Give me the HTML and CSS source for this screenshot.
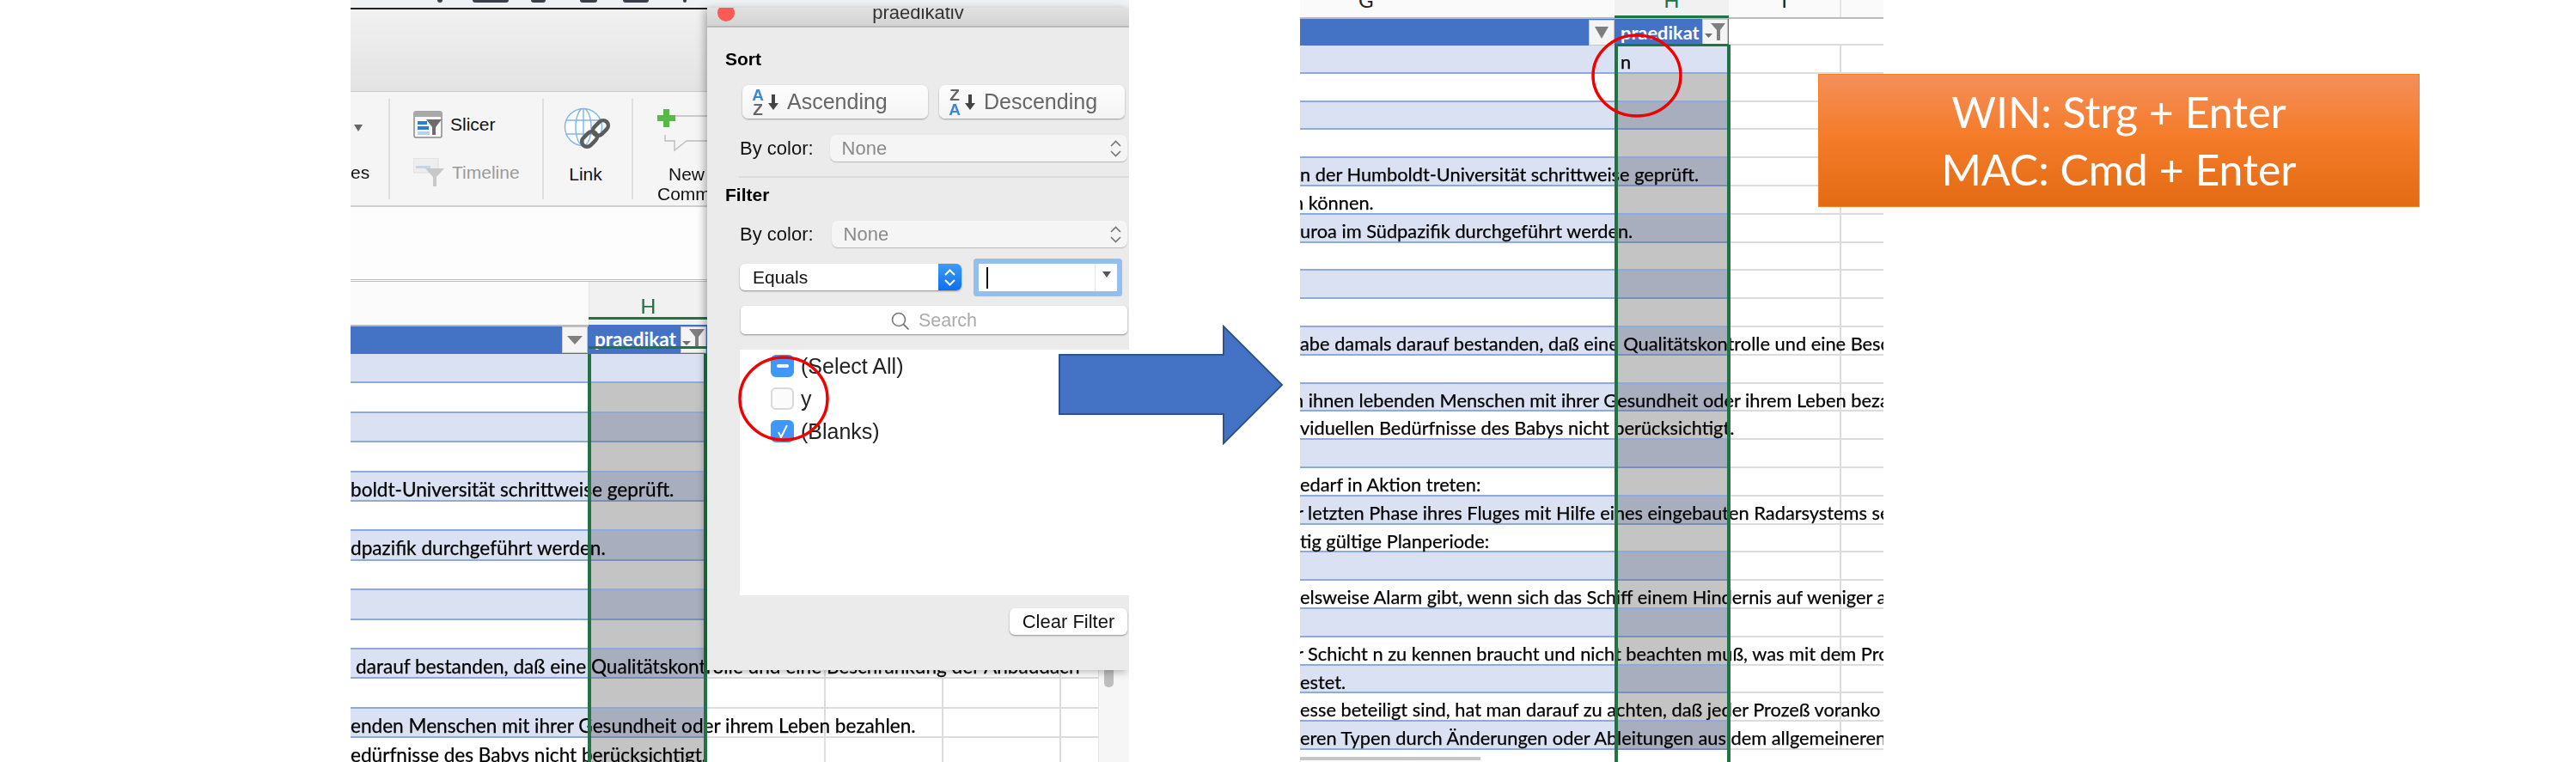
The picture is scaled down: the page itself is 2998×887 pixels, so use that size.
FILE: index.html

```html
<!DOCTYPE html>
<html lang="de">
<head>
    <meta charset="UTF-8">
    <title>Filter praedikativ</title>
    <link rel="stylesheet" href="styles.css">
</head>
<body>
<div class="stage">

    <!-- linker Screenshot: Excel mit Filterdialog -->
    <div class="shot shot-left">
        <div class="menubar"><i class="m1"></i><i class="m2"></i><i class="m3"></i><i class="m4"></i><i class="m5"></i><i class="m6"></i></div>
        <div class="toolbar"></div>
        <div class="ribbon">
            <div class="group g-shapes">
                <span class="tri"></span>
                <span class="rb-label">es</span>
            </div>
            <div class="group g-slicer">
                <div class="rb-item">
                    <svg width="34" height="32" viewBox="0 0 34 32"><rect x="1" y="1" width="32" height="30" rx="2" fill="#fafafa" stroke="#8b8b8b" stroke-width="1.5"/><rect x="1" y="1" width="32" height="6" fill="#a9a9a9"/><rect x="5" y="12" width="11" height="4" fill="#2f7bd6"/><rect x="5" y="18" width="13" height="4" fill="#2f7bd6"/><rect x="5" y="24" width="14" height="4" fill="#b7d2f0"/><path d="M15 10h18l-7 9v9h-4v-9z" fill="#6d6d6d"/></svg>
                    <span>Slicer</span>
                </div>
                <div class="rb-item off">
                    <svg width="36" height="34" viewBox="0 0 36 34"><rect x="0" y="0" width="29" height="17" fill="#ededed" stroke="#dcdcdc"/><rect x="3" y="9" width="17" height="3" fill="#c3d5ea"/><path d="M14 12h22l-9 10v11h-4V22z" fill="#c8c8c8"/></svg>
                    <span>Timeline</span>
                </div>
            </div>
            <div class="group g-link">
                <svg width="56" height="54" viewBox="0 0 56 54"><g fill="#fff" stroke="#7fb4ec" stroke-width="1.4"><circle cx="23" cy="23" r="21.5"/><ellipse cx="23" cy="23" rx="9" ry="21.5"/><path d="M3 15h40M3 31h40M23 1v44" fill="none"/></g><g fill="none" stroke="#5c5c5c" stroke-width="4.5"><rect x="33" y="18" width="20" height="12" rx="6" transform="rotate(-45 43 24)"/><rect x="20" y="31" width="20" height="12" rx="6" transform="rotate(-45 30 37)"/></g></svg>
                <span class="rb-label">Link</span>
            </div>
            <div class="group g-comment">
                <svg width="60" height="50" viewBox="0 0 60 50"><path d="M10 8h50M9 30v7h11v11l14-11h26" fill="none" stroke="#bdbdbd" stroke-width="1.4"/><path d="M7 0h7v7h7v7h-7v7H7v-7H0V7h7z" fill="#58b947"/></svg>
                <span class="rb-label">New<br>Comme</span>
            </div>
        </div>
        <div class="formula"></div>
        <div class="colhead"><div class="ch-main"></div><div class="ch-h">H</div></div>
        <div class="head">
            <div class="h-main"><span class="fbtn"><svg width="18" height="10" viewBox="0 0 18 10"><path d="M0 0h18L9 10z" fill="#7f7f7f"/></svg></span></div>
            <div class="h-pred">praedikat<span class="fbtn"><svg width="26" height="24" viewBox="0 0 26 24"><path d="M0 14h10l-5 5z" fill="#6f6f6f"/><path d="M8 0h18l-7 9v12h-4V9z" fill="#7f7f7f"/></svg></span></div>
        </div>
        <div class="row band plain"><div class="c-main"></div><div class="c-h"></div><div class="c-x"></div><div class="c-x"></div><div class="c-x"></div><div class="c-x last"></div></div>
        <div class="row"><div class="c-main"></div><div class="c-h"></div><div class="c-x"></div><div class="c-x"></div><div class="c-x"></div><div class="c-x last"></div></div>
        <div class="row band"><div class="c-main"></div><div class="c-h"></div><div class="c-x"></div><div class="c-x"></div><div class="c-x"></div><div class="c-x last"></div></div>
        <div class="row"><div class="c-main"></div><div class="c-h"></div><div class="c-x"></div><div class="c-x"></div><div class="c-x"></div><div class="c-x last"></div></div>
        <div class="row band"><div class="c-main"><span>boldt-Universität schrittweise geprüft.</span></div><div class="c-h"></div><div class="c-x"></div><div class="c-x"></div><div class="c-x"></div><div class="c-x last"></div></div>
        <div class="row"><div class="c-main"></div><div class="c-h"></div><div class="c-x"></div><div class="c-x"></div><div class="c-x"></div><div class="c-x last"></div></div>
        <div class="row band"><div class="c-main"><span>dpazifik durchgeführt werden.</span></div><div class="c-h"></div><div class="c-x"></div><div class="c-x"></div><div class="c-x"></div><div class="c-x last"></div></div>
        <div class="row"><div class="c-main"></div><div class="c-h"></div><div class="c-x"></div><div class="c-x"></div><div class="c-x"></div><div class="c-x last"></div></div>
        <div class="row band"><div class="c-main"></div><div class="c-h"></div><div class="c-x"></div><div class="c-x"></div><div class="c-x"></div><div class="c-x last"></div></div>
        <div class="row"><div class="c-main"></div><div class="c-h"></div><div class="c-x"></div><div class="c-x"></div><div class="c-x"></div><div class="c-x last"></div></div>
        <div class="row band"><div class="c-main"><span class="ind">darauf bestanden, daß eine Qualitätskontrolle und eine Beschränkung der Anbaudach</span></div><div class="c-h"></div><div class="c-x"></div><div class="c-x"></div><div class="c-x"></div><div class="c-x last"></div></div>
        <div class="row"><div class="c-main"></div><div class="c-h"></div><div class="c-x"></div><div class="c-x"></div><div class="c-x"></div><div class="c-x last"></div></div>
        <div class="row band"><div class="c-main"><span>enden Menschen mit ihrer Gesundheit oder ihrem Leben bezahlen.</span></div><div class="c-h"></div><div class="c-x"></div><div class="c-x"></div><div class="c-x"></div><div class="c-x last"></div></div>
        <div class="row"><div class="c-main"><span>edürfnisse des Babys nicht berücksichtigt.</span></div><div class="c-h"></div><div class="c-x"></div><div class="c-x"></div><div class="c-x"></div><div class="c-x last"></div></div>

        <div class="sel"></div>
        <div class="sbar"><div class="sthumb"></div></div>

        <div class="dialog">
            <div class="d-title"><span>praedikativ</span><i class="d-close"></i></div>
            <h4 class="d-head sort">Sort</h4>
            <div class="d-btns">
                <div class="d-btn"><span class="az"><b class="blue">A</b><b>Z</b></span><svg class="down" width="12" height="18" viewBox="0 0 12 18"><path d="M4 0h4v10h4l-6 8-6-8h4z" fill="#444"/></svg>Ascending</div>
                <div class="d-btn"><span class="az"><b>Z</b><b class="blue">A</b></span><svg class="down" width="12" height="18" viewBox="0 0 12 18"><path d="M4 0h4v10h4l-6 8-6-8h4z" fill="#444"/></svg>Descending</div>
            </div>
            <div class="d-row r-color">
                <label>By color:</label>
                <div class="d-select">None
                    <svg width="13" height="20" viewBox="0 0 13 20"><path d="M1 7l5.500-5.500L12 7M1 13l5.500 5.500L12 13" fill="none" stroke="#777" stroke-width="1.600"/></svg>
                </div>
            </div>
            <div class="d-sep"></div>
            <h4 class="d-head filter">Filter</h4>
            <div class="d-row r-color2">
                <label>By color:</label>
                <div class="d-select second">None
                    <svg width="13" height="20" viewBox="0 0 13 20"><path d="M1 7l5.500-5.500L12 7M1 13l5.500 5.500L12 13" fill="none" stroke="#777" stroke-width="1.600"/></svg>
                </div>
            </div>
            <div class="d-row r-equals">
                <div class="d-equals">Equals
                    <span class="stepper"><svg width="13" height="20" viewBox="0 0 13 20"><path d="M1 7l5.500-5.500L12 7M1 13l5.500 5.500L12 13" fill="none" stroke="#fff" stroke-width="2"/></svg></span>
                </div>
                <div class="d-input"><i class="caret"></i><span class="combo"></span></div>
            </div>
            <div class="d-search">
                <svg width="21" height="21" viewBox="0 0 21 21"><circle cx="9" cy="9" r="7.500" fill="none" stroke="#777" stroke-width="1.600"/><path d="M14.500 14.500l6 6" stroke="#777" stroke-width="1.800"/></svg>
                Search
            </div>
            <div class="d-list">
                <div class="li"><span class="cb mixed"></span>(Select All)</div>
                <div class="li"><span class="cb"></span>y</div>
                <div class="li"><span class="cb on"><svg width="16" height="18" viewBox="0 0 16 18"><path d="M3 10l3 6 7-14" fill="none" stroke="#fff" stroke-width="2"/></svg></span>(Blanks)</div>
            </div>
            <div class="d-clear">Clear Filter</div>
        </div>
    </div>

    <!-- rechter Screenshot: Ergebnis nach Eingabe -->
    <div class="shot shot-right">
        <div class="colhead"><div class="ch-main">G</div><div class="ch-h">H</div><div class="ch-i">I</div><div class="ch-rest"></div></div>
        <div class="head">
            <div class="h-main"><span class="fbtn"><svg width="16" height="14" viewBox="0 0 16 14"><path d="M0 0h16L8 14z" fill="#7f7f7f"/></svg></span></div>
            <div class="h-pred">praedikat<span class="fbtn"><svg width="24" height="22" viewBox="0 0 24 22"><path d="M0 12h9l-4.500 5z" fill="#6f6f6f"/><path d="M7 0h17l-6 8v12h-4V8z" fill="#7f7f7f"/></svg></span></div>
            <div class="h-rest"></div>
        </div>
        <div class="row band plain"><div class="c-main"></div><div class="c-h"><span class="val">n</span></div><div class="c-x"></div><div class="c-x last"></div></div>
        <div class="row"><div class="c-main"></div><div class="c-h"></div><div class="c-x"></div><div class="c-x last"></div></div>
        <div class="row band"><div class="c-main"></div><div class="c-h"></div><div class="c-x"></div><div class="c-x last"></div></div>
        <div class="row"><div class="c-main"></div><div class="c-h"></div><div class="c-x"></div><div class="c-x last"></div></div>
        <div class="row band"><div class="c-main"><span>n der Humboldt-Universität schrittweise geprüft.</span></div><div class="c-h"></div><div class="c-x"></div><div class="c-x last"></div></div>
        <div class="row"><div class="c-main"><span class="clip-n">n können.</span></div><div class="c-h"></div><div class="c-x"></div><div class="c-x last"></div></div>
        <div class="row band"><div class="c-main"><span>uroa im Südpazifik durchgeführt werden.</span></div><div class="c-h"></div><div class="c-x"></div><div class="c-x last"></div></div>
        <div class="row"><div class="c-main"></div><div class="c-h"></div><div class="c-x"></div><div class="c-x last"></div></div>
        <div class="row band"><div class="c-main"></div><div class="c-h"></div><div class="c-x"></div><div class="c-x last"></div></div>
        <div class="row"><div class="c-main"></div><div class="c-h"></div><div class="c-x"></div><div class="c-x last"></div></div>
        <div class="row band"><div class="c-main"><span>abe damals darauf bestanden, daß eine Qualitätskontrolle und eine Besc</span></div><div class="c-h"></div><div class="c-x"></div><div class="c-x last"></div></div>
        <div class="row"><div class="c-main"></div><div class="c-h"></div><div class="c-x"></div><div class="c-x last"></div></div>
        <div class="row band"><div class="c-main"><span class="clip-n">n ihnen lebenden Menschen mit ihrer Gesundheit oder ihrem Leben beza</span></div><div class="c-h"></div><div class="c-x"></div><div class="c-x last"></div></div>
        <div class="row"><div class="c-main"><span>viduellen Bedürfnisse des Babys nicht berücksichtigt.</span></div><div class="c-h"></div><div class="c-x"></div><div class="c-x last"></div></div>
        <div class="row band"><div class="c-main"></div><div class="c-h"></div><div class="c-x"></div><div class="c-x last"></div></div>
        <div class="row"><div class="c-main"><span>edarf in Aktion treten:</span></div><div class="c-h"></div><div class="c-x"></div><div class="c-x last"></div></div>
        <div class="row band"><div class="c-main"><span class="clip-r">r letzten Phase ihres Fluges mit Hilfe eines eingebauten Radarsystems sel</span></div><div class="c-h"></div><div class="c-x"></div><div class="c-x last"></div></div>
        <div class="row"><div class="c-main"><span>tig gültige Planperiode:</span></div><div class="c-h"></div><div class="c-x"></div><div class="c-x last"></div></div>
        <div class="row band"><div class="c-main"></div><div class="c-h"></div><div class="c-x"></div><div class="c-x last"></div></div>
        <div class="row"><div class="c-main"><span>elsweise Alarm gibt, wenn sich das Schiff einem Hindernis auf weniger al</span></div><div class="c-h"></div><div class="c-x"></div><div class="c-x last"></div></div>
        <div class="row band"><div class="c-main"></div><div class="c-h"></div><div class="c-x"></div><div class="c-x last"></div></div>
        <div class="row"><div class="c-main"><span class="clip-r">r Schicht n zu kennen braucht und nicht beachten muß, was mit dem Pro</span></div><div class="c-h"></div><div class="c-x"></div><div class="c-x last"></div></div>
        <div class="row band"><div class="c-main"><span>estet.</span></div><div class="c-h"></div><div class="c-x"></div><div class="c-x last"></div></div>
        <div class="row"><div class="c-main"><span>esse beteiligt sind, hat man darauf zu achten, daß jeder Prozeß voranko</span></div><div class="c-h"></div><div class="c-x"></div><div class="c-x last"></div></div>
        <div class="row band"><div class="c-main"><span>eren Typen durch Änderungen oder Ableitungen aus dem allgemeineren</span></div><div class="c-h"></div><div class="c-x"></div><div class="c-x last"></div></div>
        <div class="hscroll"></div>
        <div class="sel"></div>
    </div>

    <!-- Anmerkungen über den Screenshots -->
    <svg class="mark mark-arrow" width="264" height="140" viewBox="0 0 264 140"><path d="M1 35h191V2l68 68-68 68v-34H1z" fill="#4472c4" stroke="#2f528f" stroke-width="2"/></svg>
    <svg class="mark mark-c1" width="110" height="102" viewBox="0 0 110 102"><ellipse cx="55" cy="51" rx="51" ry="48" fill="none" stroke="#f00000" stroke-width="3.5"/></svg>
    <svg class="mark mark-c2" width="110" height="102" viewBox="0 0 110 102"><ellipse cx="54" cy="51" rx="51" ry="47" fill="none" stroke="#f00000" stroke-width="3.5"/></svg>
    <div class="hint">WIN: Strg + Enter<br>MAC: Cmd + Enter</div>
</div>
</body>
</html>
```

FILE: styles.css

```css
html, body {
    margin: 0;
    background: #fff;
}
.stage {
    position: relative;
    width: 2998px;
    height: 887px;
    overflow: hidden;
    display: flex;
    padding-left: 408px;
    gap: 199px;
    box-sizing: border-box;
    font-family: "Liberation Sans", Arial, sans-serif;
    color: #111;
}
.shot {
    position: relative;
    height: 887px;
    overflow: hidden;
    flex: none;
    font-family: Lato, "Liberation Sans", sans-serif;
    filter: blur(0.4px);
}
.shot-left {
    width: 906px;
    font-size: 22.6px;
}
.shot-right {
    width: 679px;
    font-size: 21.8px;
}

/* ribbon */
.menubar {
    height: 9px;
    background: #eef2f5;
    position: relative;
}
.menubar i {
    position: absolute;
    top: 0;
    height: 3px;
    background: #3a3f47;
    border-radius: 0 0 6px 6px;
}
.m1 { left: 101px; width: 6px; }
.m2 { left: 142px; width: 42px; }
.m3 { left: 210px; width: 17px; }
.m4 { left: 267px; width: 20px; }
.m5 { left: 317px; width: 30px; }
.m6 { left: 387px; width: 4px; }
.toolbar {
    height: 98px;
    box-sizing: border-box;
    border-top: 2px solid #222;
    border-bottom: 1px solid #c9c9c9;
    background: linear-gradient(#f1f1f1, #e3e3e3);
}
.ribbon {
    height: 134px;
    box-sizing: border-box;
    background: #f5f5f5;
    border-bottom: 2px solid #cfcfcf;
    display: flex;
    padding: 8px 0;
    font-family: "Liberation Sans", sans-serif;
    font-size: 21px;
}
.group {
    box-sizing: border-box;
    border-right: 2px solid #dedede;
    height: 117px;
    flex: none;
}
.g-shapes {
    width: 46px;
    position: relative;
}
.tri {
    display: block;
    width: 0;
    margin: 30px 0 0 4px;
    border: 5px solid transparent;
    border-width: 8px 5px 0;
    border-top-color: #666;
}
.g-shapes .rb-label {
    position: absolute;
    left: 0;
    top: 74px;
}
.g-slicer {
    width: 179px;
    padding: 14px 0 0 27px;
}
.rb-item {
    display: flex;
    align-items: center;
    gap: 9px;
    height: 32px;
    margin-bottom: 24px;
}
.off {
    color: #9a9a9a;
}
.g-link {
    width: 104px;
    padding: 10px 5px 0 0;
    text-align: center;
}
.g-link svg {
    display: block;
    margin: 0 auto 12px 23px;
}
.g-comment {
    border: 0;
    width: 200px;
    padding: 12px 0 0 28px;
    line-height: 23px;
}
.g-comment svg { display: block; margin-bottom: 14px; }
.g-comment .rb-label {
    display: block;
    width: 68px;
    text-align: center;
}
.formula {
    height: 87px;
    border-bottom: 3px double #bdbdbd;
    box-sizing: border-box;
    background: #fdfdfd;
}

/* tabelle */
.colhead {
    display: flex;
    background: #fbfbfb;
    font-size: 24px;
    text-align: center;
    color: #217346;
    height: 50px;
}
.shot-left .colhead { height: 50px; }
.ch-main { width: 277px; }
.ch-h {
    width: 138px;
    background: #f1f1f1;
    line-height: 56px;
    border-left: 1px solid #e2e2e2;
    box-sizing: border-box;
}
.head {
    display: flex;
    height: 34px;
    box-sizing: border-box;
    color: #fff;
    font-weight: bold;
}
.h-main {
    width: 277px;
    background: #4472c4;
    border-top: 2px solid #bbb;
    display: flex;
    justify-content: flex-end;
    box-sizing: border-box;
}
.h-pred {
    width: 138px;
    background: #4472c4;
    padding-left: 7px;
    display: flex;
    justify-content: space-between;
    align-items: center;
    box-sizing: border-box;
    line-height: 1;
}
.fbtn {
    width: 28px;
    height: 29px;
    margin-right: 1px;
    background: #f4f4f4;
    border: 1px solid #c6c6c6;
    display: flex;
    align-items: center;
    justify-content: center;
    flex: none;
}
.row {
    display: grid;
    height: 34.4px;
    grid-template-columns: 277px 138px 138px 137px 137px 43px;
    grid-template-rows: 100%;
    line-height: 39px;
    white-space: nowrap;
    color: #000;
    -webkit-text-stroke: 0.25px #000;
}
.row > div {
    box-sizing: border-box;
    border-bottom: 2px solid #dcdcdc;
}
.c-main {
    position: relative;
    z-index: 1;
}
.ind { padding-left: 6px; }
.clip-n { margin-left: -8px; }
.clip-r { margin-left: -4px; }
.row .c-main { border-bottom-color: #8eaadb; }
.row .c-h {
    background: #c4c4c4;
    border-bottom-color: #8eaadb;
}
.row.band .c-main { background: #d9e1f2; }
.row.band .c-h {
    background: #a8aebd;
    border-bottom-color: #7a8fb8;
}
.row.band.plain .c-h { background: #d9e1f2; border-bottom-color: #8eaadb; }
.c-x { border-right: 2px solid #dcdcdc; }
.c-x.last { border-right: 0; }
.sel {
    position: absolute;
    left: 276px;
    top: 412px;
    width: 131px;
    height: 480px;
    border: solid #217346;
    border-width: 0 4px;
    z-index: 2;
}
.shot-left::after,
.shot-right::after {
    content: "";
    position: absolute;
    left: 277px;
    top: 369px;
    width: 138px;
    height: 3px;
    background: #217346;
    z-index: 2;
    box-shadow: 0 34px 0 #217346;
}
.shot-right::after {
    left: 366px;
    top: 18px;
    width: 133px;
    box-shadow: 0 33px 0 #217346;
}
.sbar {
    position: absolute;
    left: 870px;
    top: 700px;
    width: 36px;
    height: 187px;
    background: #f6f6f6;
    border-left: 1px solid #e4e4e4;
    box-sizing: border-box;
}
.sthumb {
    margin-left: 6px;
    width: 11px;
    height: 100px;
    background: #bdbdbd;
    border-radius: 5px;
}

/* dialog */
.dialog {
    position: absolute;
    left: 415px;
    top: 9px;
    width: 491px;
    height: 771px;
    background: #ebebeb;
    box-shadow: -3px 2px 9px rgba(0,0,0,.3);
    font-family: "Liberation Sans", sans-serif;
    font-size: 22px;
    z-index: 3;
}
.d-title {
    height: 21px;
    background: linear-gradient(#e2e2e2, #d3d3d3);
    border-bottom: 2px solid #b9b9b9;
    overflow: hidden;
    text-align: center;
    line-height: 12px;
    color: #333;
    position: relative;
}
.d-close {
    position: absolute;
    left: 12px;
    top: -4px;
    width: 20px;
    height: 20px;
    border-radius: 50%;
    background: #fb5b55;
}
.d-head {
    margin: 0;
    font-size: 21px;
    line-height: 24px;
    padding-left: 21px;
    color: #000;
}
.d-head.sort { margin-top: 25px; }
.d-head.filter { margin-top: 8px; }
.d-btns {
    display: flex;
    gap: 13px;
    padding-left: 41px;
    margin-top: 18px;
}
.d-btn {
    width: 216px;
    height: 39px;
    background: linear-gradient(#fdfdfd, #f4f4f4);
    border-radius: 7px;
    box-shadow: 0 1px 2px rgba(0,0,0,.35);
    display: flex;
    align-items: center;
    font-size: 25px;
    color: #666;
    padding-left: 10px;
    box-sizing: border-box;
}
.az {
    display: flex;
    flex-direction: column;
    font-size: 19px;
    line-height: 17px;
    width: 16px;
    text-align: center;
    color: #666;
}
.az .blue { color: #3f86d8; }
.down { margin: 0 10px 0 4px; }
.d-row {
    display: flex;
    align-items: center;
    padding-left: 38px;
    height: 31px;
}
.r-color { margin-top: 19px; }
.r-color2 { margin-top: 18px; }
.r-equals { margin-top: 19px; }
.d-select {
    margin-left: 19px;
    width: 346px;
    height: 31px;
    box-sizing: border-box;
    background: #f5f5f5;
    border-radius: 7px;
    box-shadow: 0 1px 1px rgba(0,0,0,.22);
    color: #8a8a8a;
    display: flex;
    justify-content: space-between;
    align-items: center;
    padding: 0 7px 0 14px;
}
.d-select.second {
    margin-left: 21px;
    width: 344px;
}
.d-sep {
    height: 2px;
    background: #dcdcdc;
    margin: 17px 0 0 37px;
}
.d-equals {
    width: 258px;
    height: 31px;
    background: #fff;
    border-radius: 6px;
    box-shadow: 0 1px 2px rgba(0,0,0,.4);
    display: flex;
    justify-content: space-between;
    align-items: center;
    padding-left: 15px;
    box-sizing: border-box;
    overflow: hidden;
    font-size: 21px;
}
.stepper {
    width: 27px;
    height: 31px;
    background: linear-gradient(#3d9bfb, #0c6ff0);
    display: flex;
    align-items: center;
    justify-content: center;
}
.d-input {
    margin-left: 20px;
    width: 161px;
    height: 32px;
    background: #fff;
    box-shadow: 0 0 0 6px #93bfef;
    border-radius: 1px;
    display: flex;
    justify-content: space-between;
    align-items: center;
    padding-left: 9px;
    box-sizing: border-box;
    margin-top: 1px;
    position: relative;
}
.caret {
    width: 2px;
    height: 25px;
    background: #111;
}
.combo {
    width: 26px;
    height: 32px;
    box-sizing: border-box;
    border-left: 1px solid #e6e6e6;
    position: relative;
}
.combo::after {
    content: "";
    position: absolute;
    left: 8px;
    top: 9px;
    border: solid transparent;
    border-width: 7px 5px 0;
    border-top-color: #555;
}
.d-search {
    margin: 18px 2px 0 39px;
    height: 33px;
    background: #fff;
    border-radius: 5px;
    box-shadow: 0 1px 2px rgba(0,0,0,.4);
    display: flex;
    align-items: center;
    justify-content: center;
    gap: 11px;
    color: #aaa;
    font-size: 21.500px;
    padding-top: 1px;
    box-sizing: border-box;
}
.d-list {
    margin: 18px 0 0 38px;
    height: 286px;
    background: #fff;
    padding: 6px 0 0 36px;
    box-sizing: border-box;
    font-size: 25px;
    display: flex;
    flex-direction: column;
    gap: 12px;
    color: #222;
}
.li {
    display: flex;
    align-items: center;
    gap: 8px;
    height: 26px;
}
.cb {
    width: 27px;
    height: 26px;
    box-sizing: border-box;
    border: 2px solid #d9d9d9;
    border-radius: 6px;
    background: #fbfbfb;
    display: flex;
    align-items: center;
    justify-content: center;
}
.cb.on, .cb.mixed {
    background: #3f97f8;
    border-color: #3f97f8;
}
.cb.mixed::after {
    content: "";
    width: 14px;
    height: 4px;
    border-radius: 2px;
    background: #fff;
}
.d-clear {
    margin: 15px 2px 0 auto;
    width: 137px;
    height: 31px;
    background: #fff;
    border-radius: 6px;
    box-shadow: 0 1px 2px rgba(0,0,0,.4);
    text-align: center;
    line-height: 31px;
}

/* rechter screenshot */
.shot-right .colhead {
    height: 20px;
    line-height: 0;
    color: #222;
    background: #fafafa;
    overflow: hidden;
}
.shot-right .ch-main {
    width: 366px;
    text-align: left;
    padding-left: 68px;
    box-sizing: border-box;
}
.shot-right .ch-h { width: 133px; line-height: 0; color: #217346; border: 0; }
.ch-i { width: 131px; border-right: 2px solid #e4e4e4; box-sizing: border-box; }
.shot-right .head { height: 33px; border-top: 2px solid #bbb; }
.shot-right .h-main { width: 366px; border: 0; }
.shot-right .h-pred { width: 133px; }
.shot-right .h-main .fbtn { margin: 1px 0 0; height: 28px; }
.h-rest { flex: 1; background: #fff; border-bottom: 2px solid #dcdcdc; }
.shot-right .row {
    height: 32.800px;
    grid-template-columns: 366px 133px 131px 49px;
    line-height: 37px;
}
.val { padding-left: 7px; }
.shot-right .sel {
    left: 366px;
    top: 52px;
    width: 127px;
    height: 840px;
}
.hscroll {
    width: 210px;
    height: 4px;
    margin-top: 8px;
    background: #c6c6c6;
}

/* anmerkungen */
.mark {
    position: absolute;
    z-index: 5;
}
.mark-arrow { left: 1232px; top: 378px; }
.mark-c1 { left: 857px; top: 413px; }
.mark-c2 { left: 1851px; top: 37px; }
.hint {
    position: absolute;
    left: 2116px;
    top: 86px;
    width: 700px;
    height: 155px;
    box-sizing: border-box;
    border: 1px solid #f57f24;
    background: linear-gradient(#f48f5a, #f47b28 48%, #e36b14);
    color: #fff;
    font-family: Lato, sans-serif;
    font-size: 50px;
    line-height: 67px;
    text-align: center;
    padding-top: 10px;
}
```
